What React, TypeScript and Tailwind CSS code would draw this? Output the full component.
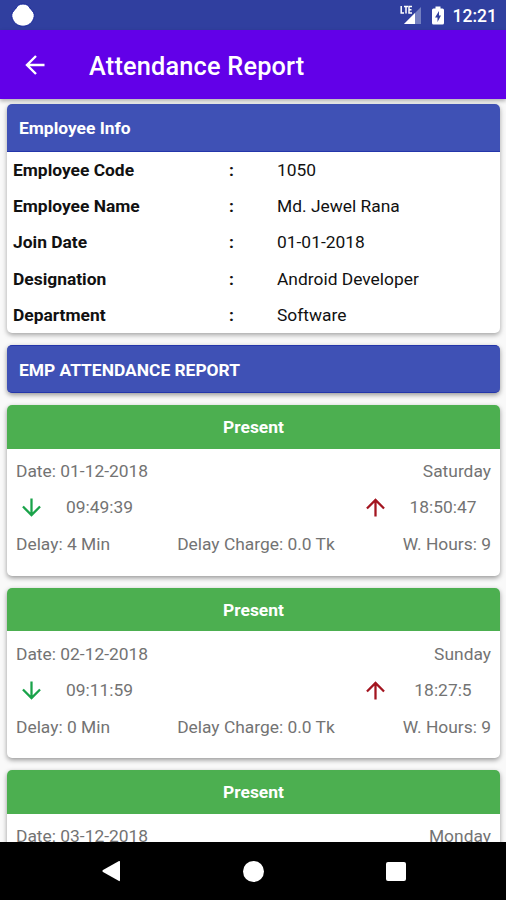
type Attendance = {
  date: string;
  day: string;
  inTime: string;
  outTime: string;
  delay: string;
  charge: string;
  hours: string;
};

const employee = [
  { label: "Employee Code", value: "1050" },
  { label: "Employee Name", value: "Md. Jewel Rana" },
  { label: "Join Date", value: "01-01-2018" },
  { label: "Designation", value: "Android Developer" },
  { label: "Department", value: "Software" },
];

const records: Attendance[] = [
  { date: "01-12-2018", day: "Saturday", inTime: "09:49:39", outTime: "18:50:47", delay: "4 Min", charge: "0.0 Tk", hours: "9" },
  { date: "02-12-2018", day: "Sunday", inTime: "09:11:59", outTime: "18:27:5", delay: "0 Min", charge: "0.0 Tk", hours: "9" },
  { date: "03-12-2018", day: "Monday", inTime: "", outTime: "", delay: "", charge: "", hours: "" },
];

function Arrow({ className }: { className: string }) {
  return (
    <svg viewBox="0 0 20 20" fill="none" stroke="currentColor" strokeWidth="2.4" className={className}>
      <path d="M10 0.5V18M1 9L10 18L19 9" />
    </svg>
  );
}

function StatusBar() {
  return (
    <div className="flex h-[30px] shrink-0 items-center justify-between bg-[#303f9f] pl-[11px] pr-[9px] text-white">
      <svg viewBox="0 0 24 24" className="h-6 w-6">
        <path
          d="M12 1C15.500 1 18 2.500 19.500 6C22.500 8.500 23.600 11 23.200 13.500C22 19.500 17.500 23.200 12 23.200C6.500 23.200 2 19.500 0.800 13.500C0.400 11 1.500 8.500 4.500 6C6 2.500 8.500 1 12 1Z"
          fill="#fff"
          stroke="#15259a"
          strokeWidth="1"
        />
      </svg>
      <div className="flex items-center">
        <svg viewBox="0 0 22 20" className="mr-[10px] h-5 w-[22px]">
          <path d="M21 2V19H4Z" fill="#7480c0" />
          <path d="M15 8V19H4Z" fill="#fff" />
          <path d="M1.200 1V8H4M4 1.600H8M6 1.600V8.500M12 1.600H9V8H12M9 4.800H11.500" fill="none" stroke="#fff" strokeWidth="1.500" />
        </svg>
        <svg viewBox="0 0 12 19" className="mr-[9px] h-[19px] w-3">
          <path d="M3.500 0.500H8.500V2.500H10.500Q12 2.500 12 4V17Q12 18.500 10.500 18.500H1.500Q0 18.500 0 17V4Q0 2.500 1.500 2.500H3.500Z" fill="#fff" />
          <path d="M7 5L3 11.500H5.500V16L9 9.500H7Z" fill="#303f9f" />
        </svg>
        <span className="mt-[3px] text-[17.5px] leading-none font-medium">12:21</span>
      </div>
    </div>
  );
}

function AppBar() {
  return (
    <div className="z-10 flex h-[69px] shrink-0 items-center bg-[#6200e8] pl-[25px] text-white shadow-[0_2px_4px_rgba(0,0,0,0.3)]">
      <Arrow className="h-5 w-5 rotate-90" />
      <h1 className="ml-[44px] pt-[4px] text-[25.3px] leading-none font-medium tracking-[0.2px]">Attendance Report</h1>
    </div>
  );
}

function EmployeeCard() {
  return (
    <section className="h-[229px] shrink-0 overflow-hidden rounded-[5px] bg-white shadow-[0_2px_5px_rgba(0,0,0,0.35)]">
      <h2 className="flex h-12 items-center border-b border-[#2436aa] bg-[#3f51b5] pt-[2px] pl-3 text-[17.4px] font-bold text-white">
        Employee Info
      </h2>
      <div className="text-[17.4px] text-[#111]">
        {employee.map(({ label, value }) => (
          <div key={label} className="flex h-[36.2px] items-center pl-[6px]">
            <span className="w-[216px] font-bold">{label}</span>
            <span className="w-12 font-bold">:</span>
            <span>{value}</span>
          </div>
        ))}
      </div>
    </section>
  );
}

function AttendanceCard({ record }: { record: Attendance }) {
  return (
    <section className="h-[170.5px] shrink-0 overflow-hidden rounded-[5px] bg-white shadow-[0_2px_5px_rgba(0,0,0,0.4)]">
      <h3 className="flex h-[43.5px] items-center justify-center bg-[#4caf50] pt-px text-[17.4px] font-bold text-white">
        Present
      </h3>
      <div className="px-[9px] pt-[5px] text-[17.4px] text-[#737373]">
        <div className="flex h-9 items-center justify-between">
          <span>Date: {record.date}</span>
          <span>{record.day}</span>
        </div>
        {record.inTime && (
          <>
            <div className="flex h-[37px] items-center pb-px">
              <Arrow className="mx-[6px] h-[19px] w-[19px] text-[#1aa34a]" />
              <span className="ml-[19px] w-[299px]">{record.inTime}</span>
              <Arrow className="ml-px h-[19px] w-[19px] rotate-180 text-[#a31520]" />
              <span className="ml-[17px] w-[82px] text-center">{record.outTime}</span>
            </div>
            <div className="flex h-9 items-center justify-between">
              <span className="w-[157px]">Delay: {record.delay}</span>
              <span>Delay Charge: {record.charge}</span>
              <span className="w-[152px] text-right">W. Hours: {record.hours}</span>
            </div>
          </>
        )}
      </div>
    </section>
  );
}

function NavBar() {
  return (
    <div className="flex h-[58px] shrink-0 items-center bg-black pl-[101px] text-white">
      <svg viewBox="0 0 20 22" className="h-[22px] w-5 fill-current">
        <path d="M18 1Q19 0.500 19 2V20Q19 21.500 18 21L2 12Q0.500 11 2 10Z" />
      </svg>
      <div className="ml-[122px] h-[21px] w-[21px] rounded-full bg-white" />
      <div className="ml-[122px] h-[19px] w-[20px] rounded-[2px] bg-white" />
    </div>
  );
}

export default function App() {
  return (
    <div className="flex h-[900px] w-[506px] flex-col overflow-hidden bg-[#f9f9f9] font-['Roboto',sans-serif]">
      <StatusBar />
      <AppBar />
      <main className="flex min-h-0 flex-1 flex-col gap-3 overflow-hidden pt-[5px] pr-[6px] pl-[7px]">
        <EmployeeCard />
        <h2 className="flex h-12 shrink-0 items-center rounded-[5px] border-y border-[#2436aa] bg-[#3f51b5] pt-[2px] pl-3 text-[17.4px] font-bold text-white shadow-[0_2px_5px_rgba(0,0,0,0.4)]">
          EMP ATTENDANCE REPORT
        </h2>
        {records.map((record) => (
          <AttendanceCard key={record.date} record={record} />
        ))}
      </main>
      <NavBar />
    </div>
  );
}
